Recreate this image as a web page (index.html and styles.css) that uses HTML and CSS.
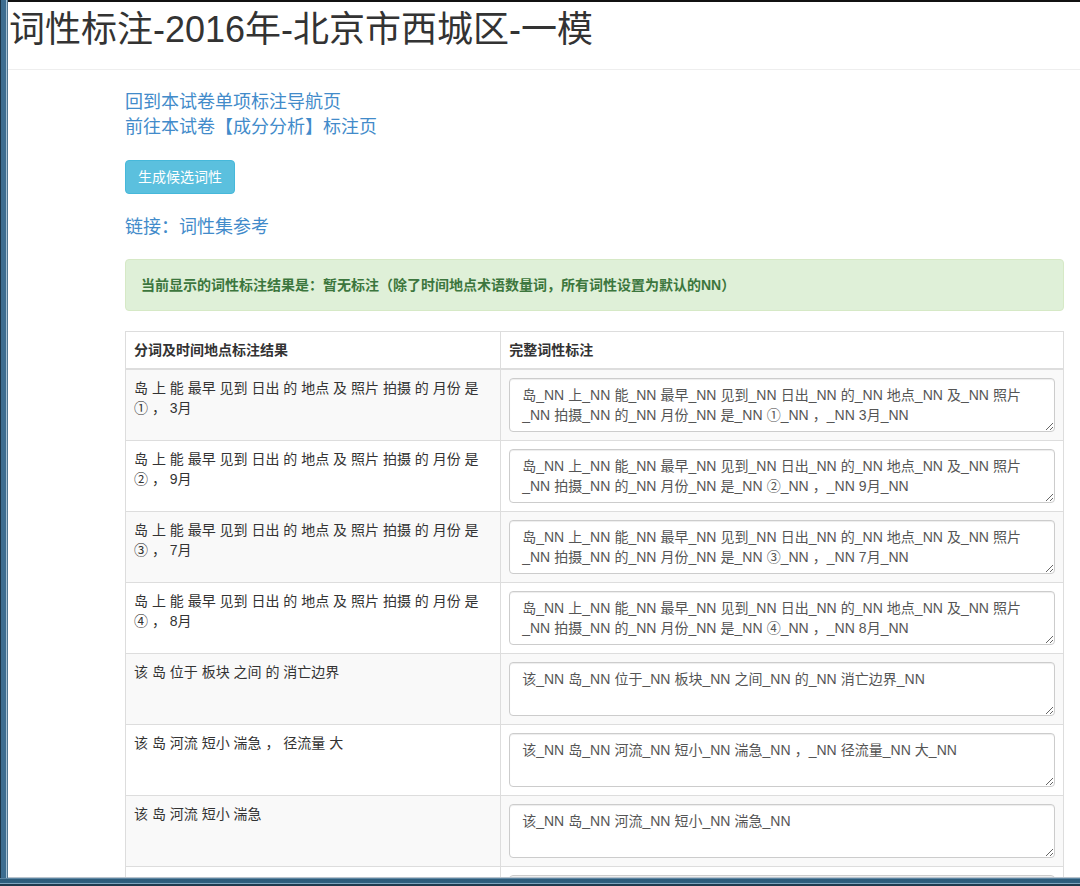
FILE: index.html
```html
<!DOCTYPE html>
<html lang="zh-CN">
<head>
<meta charset="utf-8">
<title>词性标注-2016年-北京市西城区-一模</title>
<link rel="stylesheet" href="styles.css">
</head>
<body>
<div class="window">
  <header class="page-header">
    <h1 class="title">词性标注-2016年-北京市西城区-一模</h1>
  </header>
  <main class="content">
    <div class="nav-links">
      <a href="#" class="nav-link">回到本试卷单项标注导航页</a>
      <a href="#" class="nav-link">前往本试卷【成分分析】标注页</a>
    </div>
    <button class="btn-info" type="button">生成候选词性</button>
    <p class="ref-link"><a href="#">链接：词性集参考</a></p>
    <div class="alert-success">当前显示的词性标注结果是：暂无标注（除了时间地点术语数量词，所有词性设置为默认的NN）</div>
    <table class="pos-table">
      <colgroup><col class="col-seg"><col class="col-pos"></colgroup>
      <thead>
        <tr><th>分词及时间地点标注结果</th><th>完整词性标注</th></tr>
      </thead>
      <tbody>
        <tr>
          <td>岛 上 能 最早 见到 日出 的 地点 及 照片 拍摄 的 月份 是 ① ， 3月</td>
          <td><textarea class="pos-input">岛_NN 上_NN 能_NN 最早_NN 见到_NN 日出_NN 的_NN 地点_NN 及_NN 照片_NN 拍摄_NN 的_NN 月份_NN 是_NN ①_NN ，_NN 3月_NN</textarea></td>
        </tr>
        <tr>
          <td>岛 上 能 最早 见到 日出 的 地点 及 照片 拍摄 的 月份 是 ② ， 9月</td>
          <td><textarea class="pos-input">岛_NN 上_NN 能_NN 最早_NN 见到_NN 日出_NN 的_NN 地点_NN 及_NN 照片_NN 拍摄_NN 的_NN 月份_NN 是_NN ②_NN ，_NN 9月_NN</textarea></td>
        </tr>
        <tr>
          <td>岛 上 能 最早 见到 日出 的 地点 及 照片 拍摄 的 月份 是 ③ ， 7月</td>
          <td><textarea class="pos-input">岛_NN 上_NN 能_NN 最早_NN 见到_NN 日出_NN 的_NN 地点_NN 及_NN 照片_NN 拍摄_NN 的_NN 月份_NN 是_NN ③_NN ，_NN 7月_NN</textarea></td>
        </tr>
        <tr>
          <td>岛 上 能 最早 见到 日出 的 地点 及 照片 拍摄 的 月份 是 ④ ， 8月</td>
          <td><textarea class="pos-input">岛_NN 上_NN 能_NN 最早_NN 见到_NN 日出_NN 的_NN 地点_NN 及_NN 照片_NN 拍摄_NN 的_NN 月份_NN 是_NN ④_NN ，_NN 8月_NN</textarea></td>
        </tr>
        <tr>
          <td>该 岛 位于 板块 之间 的 消亡边界</td>
          <td><textarea class="pos-input">该_NN 岛_NN 位于_NN 板块_NN 之间_NN 的_NN 消亡边界_NN</textarea></td>
        </tr>
        <tr>
          <td>该 岛 河流 短小 湍急 ， 径流量 大</td>
          <td><textarea class="pos-input">该_NN 岛_NN 河流_NN 短小_NN 湍急_NN ，_NN 径流量_NN 大_NN</textarea></td>
        </tr>
        <tr>
          <td>该 岛 河流 短小 湍急</td>
          <td><textarea class="pos-input">该_NN 岛_NN 河流_NN 短小_NN 湍急_NN</textarea></td>
        </tr>
        <tr>
          <td></td>
          <td><textarea class="pos-input"></textarea></td>
        </tr>
      </tbody>
    </table>
  </main>
</div>
<div class="taskbar"></div>
</body>
</html>
```

FILE: styles.css
```css
html, body {
  margin: 0;
  padding: 0;
}

body {
  width: 1080px;
  height: 886px;
  overflow: hidden;
  font-family: "Liberation Sans", "Noto Sans CJK SC", sans-serif;
  font-size: 14px;
  line-height: 20px;
  color: #333;
  background: linear-gradient(to right,
    #1c3547 0, #1c3547 1px,
    #3d6d90 1px, #3d6d90 6px,
    #a3bfd3 6px, #a3bfd3 7px,
    #4f7590 7px, #4f7590 8px);
}

.window {
  margin-left: 8px;
  height: 875px;
  border-top: 2px solid #111;
  border-bottom: 1px solid #b9c3cc;
  background: #fff;
  overflow: hidden;
}

.taskbar {
  height: 8px;
  background: linear-gradient(to bottom,
    #5d86a3 0, #5d86a3 1px,
    #2d5a78 1px, #2f6080 5px,
    #7fa5be 5px, #7fa5be 6px,
    #1e3b4f 6px);
}

.page-header {
  padding: 8px 0 19px 1px;
  border-bottom: 1px solid #eee;
}

.title {
  margin: 0;
  font-size: 36px;
  line-height: 40px;
  font-weight: normal;
  color: #333;
}

.content {
  width: 939px;
  padding-left: 117px;
}

a {
  color: #428bca;
  text-decoration: none;
}

.nav-links {
  margin-top: 20px;
  display: flex;
  flex-direction: column;
  align-items: flex-start;
  font-size: 18px;
  line-height: 25px;
}

.btn-info {
  display: block;
  margin-top: 20px;
  width: 110px;
  height: 34px;
  padding: 6px 12px;
  font-family: inherit;
  font-size: 14px;
  line-height: 20px;
  color: #fff;
  background: #5bc0de;
  border: 1px solid #46b8da;
  border-radius: 4px;
}

.ref-link {
  margin: 21px 0 0;
  font-size: 18px;
  line-height: 25px;
}

.alert-success {
  margin-top: 19px;
  padding: 15px;
  background: #dff0d8;
  border: 1px solid #d6e9c6;
  border-radius: 4px;
  color: #3c763d;
  font-weight: bold;
}

.pos-table {
  margin-top: 20px;
  width: 939px;
  table-layout: fixed;
  border-collapse: collapse;
  border: 1px solid #ddd;
}

.col-seg { width: 40%; }

.pos-table th,
.pos-table td {
  padding: 8px;
  border: 1px solid #ddd;
  text-align: left;
  vertical-align: top;
  line-height: 20px;
}

.pos-table th {
  font-weight: bold;
  border-bottom-width: 2px;
}

.pos-table tbody tr:nth-child(odd) {
  background: #f9f9f9;
}

.pos-input {
  display: block;
  box-sizing: border-box;
  width: 100%;
  height: 54px;
  margin: 0;
  padding: 6px 12px;
  font-family: "Liberation Sans", "Noto Sans CJK SC", sans-serif;
  font-size: 14px;
  line-height: 20px;
  word-spacing: 0.2px;
  color: #555;
  background: #fff;
  border: 1px solid #ccc;
  border-radius: 4px;
  box-shadow: inset 0 1px 1px rgba(0, 0, 0, 0.075);
}
```
